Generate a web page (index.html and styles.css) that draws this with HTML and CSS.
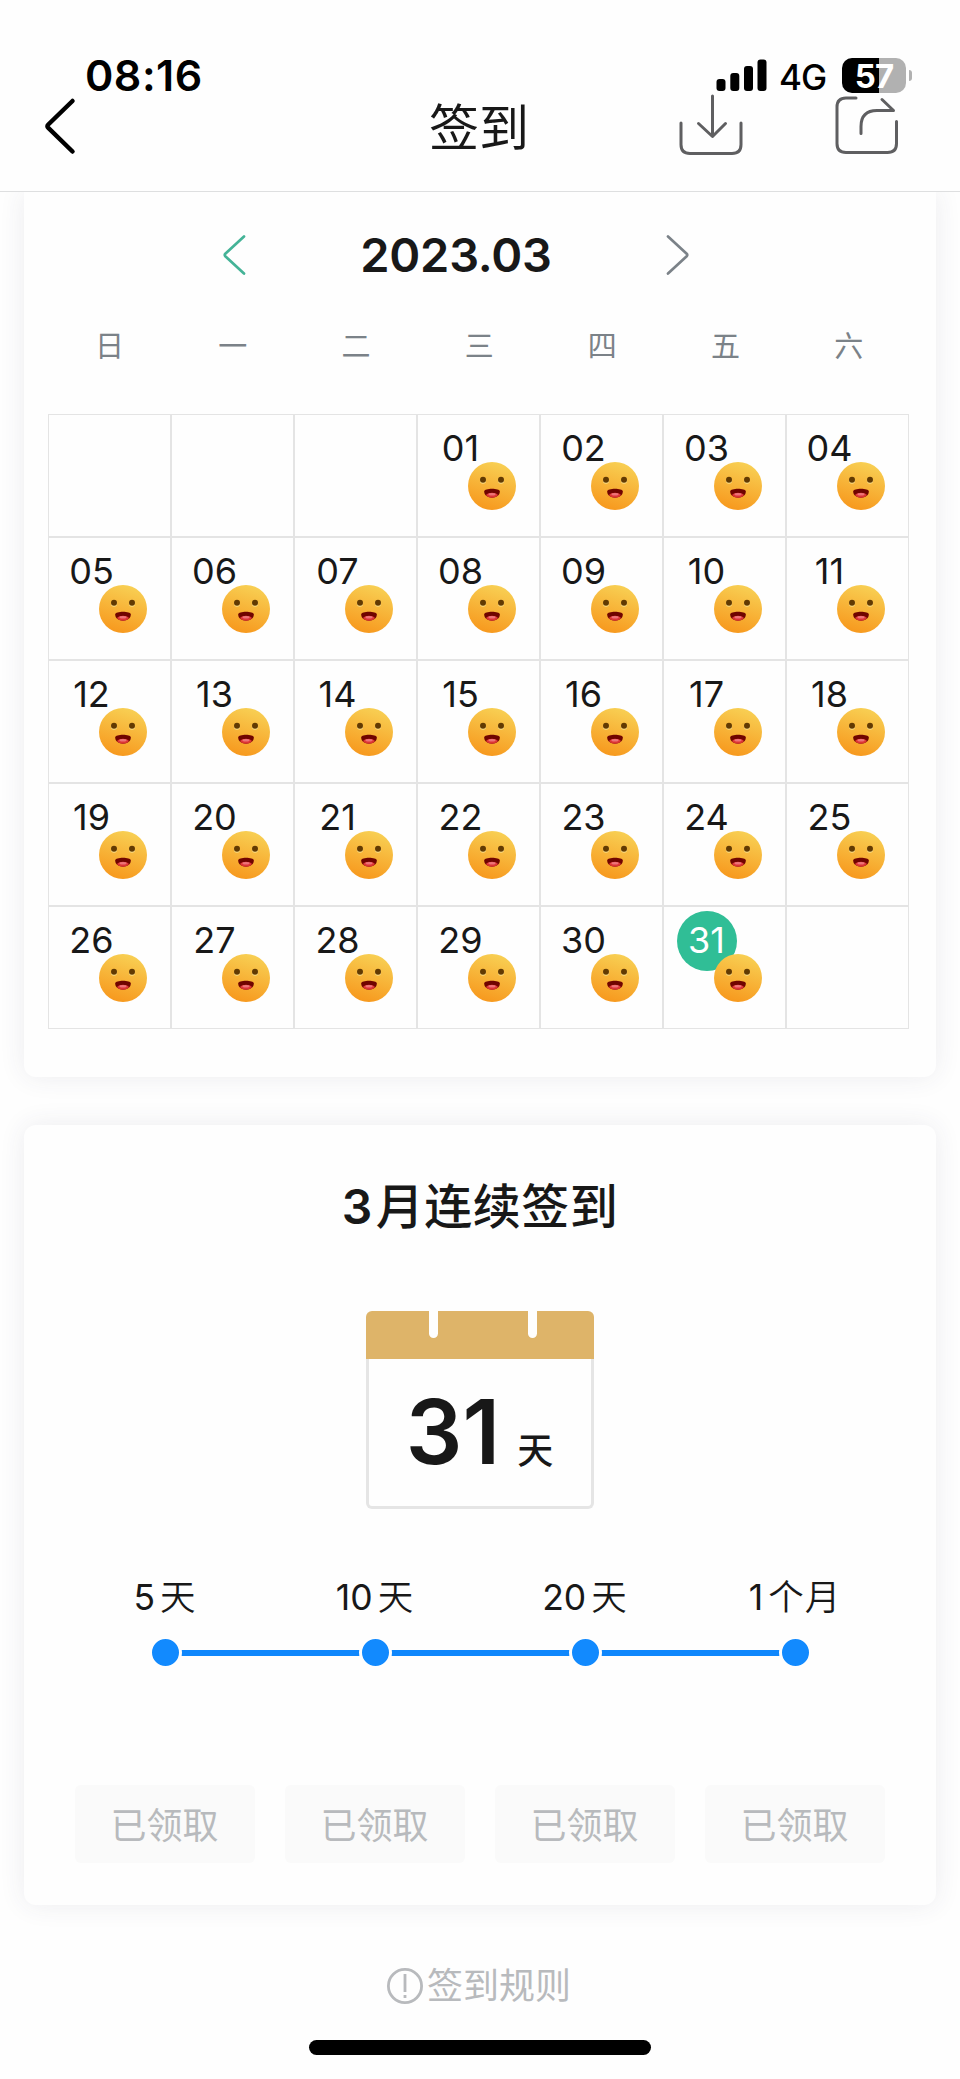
FILE: index.html
```
<!DOCTYPE html>
<html lang="zh-CN">
<head>
    <meta charset="UTF-8">
    <meta name="viewport" content="width=device-width, initial-scale=1.0">
    <title>签到</title>
    <link rel="stylesheet" href="styles.css">
</head>
<body>
    <svg class="defs" width="0" height="0">
        <defs>
            <linearGradient id="face" x1="0.65" y1="0" x2="0.35" y2="1">
                <stop offset="0" stop-color="#f8d054"/>
                <stop offset="1" stop-color="#f7981d"/>
            </linearGradient>
            <symbol id="smile" viewBox="0 0 48 48">
                <circle cx="24" cy="24" r="24" fill="url(#face)"/>
                <circle cx="15" cy="18.8" r="3" fill="#fbe08a"/>
                <circle cx="33" cy="18.8" r="3" fill="#fbe08a"/>
                <circle cx="15" cy="17.8" r="3" fill="#623a02"/>
                <circle cx="33" cy="17.8" r="3" fill="#623a02"/>
                <path d="M16.200 29.500c0-3.600 15.600-3.600 15.600 0 0 8.200-15.600 8.200-15.600 0z" fill="#700400"/>
                <path d="M18 33c2.500-3 9.500-3 12 0-2.600 3.600-9.400 3.600-12 0z" fill="#dc3535"/>
                <ellipse cx="24" cy="32.300" rx="3.600" ry="1.300" fill="#ee7378"/>
            </symbol>
        </defs>
    </svg>

    <header class="header">
        <div class="status">
            <span class="time">08:16</span>
            <div class="status-right">
                <svg class="signal" width="51" height="33" viewBox="0 0 51 33">
                    <rect x="0.500" y="20" width="9" height="12" rx="3"/>
                    <rect x="14.300" y="14" width="9" height="18" rx="3"/>
                    <rect x="28" y="7" width="9" height="25" rx="3"/>
                    <rect x="41.500" y="0.500" width="9" height="31.500" rx="3"/>
                </svg>
                <span class="net">4G</span>
                <span class="battery">57</span>
                <span class="nub"></span>
            </div>
        </div>
        <div class="nav">
            <svg class="back" width="34" height="60" viewBox="0 0 34 60">
                <path d="M29.500 4 5.300 27.500q-1.800 1.700 0 3.400L29.500 54.500"/>
            </svg>
            <h1 class="title">签到</h1>
            <div class="tools">
                <svg width="66" height="64" viewBox="0 0 66 64">
                    <path d="M2 32v21.500q0 9 9 9h42q9 0 9-9V32M33.500 5v40M19.500 32.500l14 13 13-13"/>
                </svg>
                <svg width="66" height="64" viewBox="0 0 66 64">
                    <path d="M21 7H11q-9 0-9 9v36.500q0 9 9 9h41.500q9 0 9-9V30.500M26 42.500v-7Q26 19.500 42 19.500h16.500L47 8.500"/>
                </svg>
            </div>
        </div>
    </header>

    <main class="content">
        <section class="card calendar">
            <div class="month">
                <svg class="arrow prev" width="24" height="44" viewBox="0 0 24 44"><path d="M22 3.500 3.300 20.800q-1.200 1.200 0 2.400L22 40.500"/></svg>
                <h2 class="month-text">2023.03</h2>
                <svg class="arrow next" width="24" height="44" viewBox="0 0 24 44"><path d="M2 3.500 20.700 20.800q1.200 1.200 0 2.400L2 40.500"/></svg>
            </div>
            <div class="week">
                <span>日</span><span>一</span><span>二</span><span>三</span><span>四</span><span>五</span><span>六</span>
            </div>
            <div class="days">
                <div class="day"></div>
                <div class="day"></div>
                <div class="day"></div>
                <div class="day"><span>01</span><svg><use href="#smile"/></svg></div>
                <div class="day"><span>02</span><svg><use href="#smile"/></svg></div>
                <div class="day"><span>03</span><svg><use href="#smile"/></svg></div>
                <div class="day"><span>04</span><svg><use href="#smile"/></svg></div>

                <div class="day"><span>05</span><svg><use href="#smile"/></svg></div>
                <div class="day"><span>06</span><svg><use href="#smile"/></svg></div>
                <div class="day"><span>07</span><svg><use href="#smile"/></svg></div>
                <div class="day"><span>08</span><svg><use href="#smile"/></svg></div>
                <div class="day"><span>09</span><svg><use href="#smile"/></svg></div>
                <div class="day"><span>10</span><svg><use href="#smile"/></svg></div>
                <div class="day"><span>11</span><svg><use href="#smile"/></svg></div>

                <div class="day"><span>12</span><svg><use href="#smile"/></svg></div>
                <div class="day"><span>13</span><svg><use href="#smile"/></svg></div>
                <div class="day"><span>14</span><svg><use href="#smile"/></svg></div>
                <div class="day"><span>15</span><svg><use href="#smile"/></svg></div>
                <div class="day"><span>16</span><svg><use href="#smile"/></svg></div>
                <div class="day"><span>17</span><svg><use href="#smile"/></svg></div>
                <div class="day"><span>18</span><svg><use href="#smile"/></svg></div>

                <div class="day"><span>19</span><svg><use href="#smile"/></svg></div>
                <div class="day"><span>20</span><svg><use href="#smile"/></svg></div>
                <div class="day"><span>21</span><svg><use href="#smile"/></svg></div>
                <div class="day"><span>22</span><svg><use href="#smile"/></svg></div>
                <div class="day"><span>23</span><svg><use href="#smile"/></svg></div>
                <div class="day"><span>24</span><svg><use href="#smile"/></svg></div>
                <div class="day"><span>25</span><svg><use href="#smile"/></svg></div>

                <div class="day"><span>26</span><svg><use href="#smile"/></svg></div>
                <div class="day"><span>27</span><svg><use href="#smile"/></svg></div>
                <div class="day"><span>28</span><svg><use href="#smile"/></svg></div>
                <div class="day"><span>29</span><svg><use href="#smile"/></svg></div>
                <div class="day"><span>30</span><svg><use href="#smile"/></svg></div>
                <div class="day today"><span>31</span><svg><use href="#smile"/></svg></div>
                <div class="day"></div>
            </div>
        </section>

        <section class="card streak">
            <h2 class="streak-title"><b>3</b>月连续签到</h2>
            <div class="sheet">
                <div class="sheet-top"><i></i><i></i></div>
                <div class="sheet-body"><b>31</b><span>天</span></div>
            </div>
            <div class="steps">
                <div class="step"><span class="label">5<em>天</em></span><span class="dot"></span></div>
                <div class="step"><span class="label">10<em>天</em></span><span class="dot"></span></div>
                <div class="step"><span class="label">20<em>天</em></span><span class="dot"></span></div>
                <div class="step"><span class="label">1<em>个月</em></span><span class="dot"></span></div>
            </div>
            <div class="buttons">
                <button class="btn">已领取</button>
                <button class="btn">已领取</button>
                <button class="btn">已领取</button>
                <button class="btn">已领取</button>
            </div>
        </section>

        <div class="rules">
            <svg width="36" height="36" viewBox="0 0 36 36">
                <circle cx="18" cy="18" r="16.600"/>
                <path d="M18 6v18M18 27v3"/>
            </svg>
            <span>签到规则</span>
        </div>
        <div class="home-bar"></div>
    </main>
</body>
</html>
```

FILE: styles.css
```
* {
    box-sizing: border-box;
}

body {
    margin: 0;
    background: #fefefe;
    color: #181818;
    font-family: Inter, "Noto Sans CJK SC", sans-serif;
}

h1, h2 {
    margin: 0;
}

svg {
    display: block;
    fill: none;
    stroke-linecap: round;
    stroke-linejoin: round;
}

.defs {
    position: absolute;
}

/* header */
.header {
    height: 192px;
    padding-top: 54px;
    border-bottom: 1px solid #dedfe0;
}

.status {
    display: flex;
    justify-content: space-between;
    height: 42px;
    padding: 0 48px 0 85px;
    color: #000;
}

.time {
    font-size: 43px;
    font-weight: 600;
    line-height: 43px;
    letter-spacing: 0.5px;
}

.status-right {
    display: flex;
    align-items: center;
}

.signal {
    fill: #000;
}

.net {
    margin-left: 12px;
    width: 48px;
    padding-top: 3px;
    font-size: 35px;
    font-weight: 500;
    line-height: 44px;
    letter-spacing: -1px;
    white-space: nowrap;
}

.battery {
    width: 64px;
    height: 35px;
    margin-left: 15px;
    border-radius: 10px;
    background: linear-gradient(90deg, #000 58%, #b1b1b1 58%);
    color: #fff;
    font-size: 33px;
    font-weight: 700;
    line-height: 36px;
    text-align: center;
    letter-spacing: -1px;
}

.nub {
    width: 3px;
    height: 11px;
    margin-left: 3px;
    border-radius: 0 3px 3px 0;
    background: #b1b1b1;
}

.nav {
    display: grid;
    grid-template-columns: 1fr 100px 1fr;
    height: 64px;
    margin-top: -5px;
    padding: 0 59px 0 43px;
}

.back {
    margin-top: 6px;
    stroke: #000;
    stroke-width: 4.500;
}

.title {
    margin-left: 7px;
    font-size: 50px;
    font-weight: 400;
    line-height: 74px;
    white-space: nowrap;
}

.tools {
    display: flex;
    justify-content: flex-end;
    gap: 90px;
}

.tools svg {
    stroke: #5f5f61;
    stroke-width: 3;
}

/* cards */
.content {
    display: flow-root;
    height: 1887px;
    overflow: hidden;
}

.card {
    margin: 0 24px;
    border-radius: 12px;
    background: #fefefe;
    box-shadow: 0 0 27px rgba(60, 60, 90, 0.09);
}

.calendar {
    height: 885px;
    padding: 0 24px;
    border-radius: 0 0 12px 12px;
}

.month {
    display: flex;
    align-items: center;
    height: 126px;
    padding-left: 174px;
}

.month-text {
    width: 374px;
    margin: -2px 23px 0;
    font-size: 47px;
    font-weight: 600;
    text-align: center;
    letter-spacing: -0.2px;
}

.arrow {
    stroke-width: 2.700;
}

.prev {
    stroke: #44b397;
}

.next {
    stroke: #7b8288;
}

.week {
    display: grid;
    grid-template-columns: repeat(7, 123.2px);
    height: 96px;
    color: #7b8288;
    font-size: 29px;
    font-weight: 400;
    line-height: 57px;
    text-align: center;
}

.days {
    display: grid;
    grid-template-columns: repeat(7, 123px);
    grid-auto-rows: 123px;
    width: 861px;
}

.day {
    position: relative;
    padding: 4px 0 0 13px;
    border: 1px solid #e4e4e4;
}

.day span {
    display: block;
    width: 60px;
    height: 60px;
    padding-right: 1px;
    border-radius: 50%;
    font-size: 36px;
    line-height: 59px;
    text-align: center;
}

.day svg {
    position: absolute;
    left: 50px;
    top: 47px;
    width: 48px;
    height: 48px;
}

.today span {
    background: #30be96;
    color: #fff;
}

/* streak card */
.streak {
    height: 780px;
    margin-top: 48px;
    padding-top: 47px;
}

.streak-title {
    height: 69px;
    font-size: 48px;
    font-weight: 500;
    line-height: 70px;
    text-align: center;
    letter-spacing: 0.5px;
}

.streak-title b {
    margin-right: 3px;
    font-weight: 600;
}

.sheet {
    width: 228px;
    height: 198px;
    margin: 70px auto 0;
}

.sheet-top {
    display: flex;
    justify-content: center;
    gap: 90px;
    height: 48px;
    padding-left: 6px;
    border-radius: 6px 6px 0 0;
    background: #deb469;
}

.sheet-top i {
    width: 9px;
    height: 27px;
    border-radius: 0 0 5px 5px;
    background: #fefefe;
}

.sheet-body {
    display: flex;
    align-items: baseline;
    justify-content: center;
    height: 150px;
    padding-right: 1px;
    border: 3px solid #e5e5e5;
    border-top: 0;
    border-radius: 0 0 6px 6px;
    line-height: 145px;
}

.sheet-body b {
    font-size: 89px;
    font-weight: 600;
}

.sheet-body span {
    margin-left: 17px;
    font-size: 36px;
    font-weight: 500;
}

.steps, .buttons {
    display: grid;
    grid-template-columns: repeat(4, 210px);
    justify-content: center;
}

.steps {
    margin-top: 58px;
}

.step {
    display: flex;
    flex-direction: column;
    align-items: center;
    background: linear-gradient(#0f87fc, #0f87fc) left 83px / 100% 6px no-repeat;
}

.step:first-child {
    background-position: right 83px;
    background-size: 50% 6px;
}

.step:last-child {
    background-size: 50% 6px;
}

.label {
    height: 69px;
    font-size: 35.500px;
    line-height: 61px;
}

.label em {
    margin-left: 5px;
    font-style: normal;
    font-weight: 350;
    letter-spacing: 1px;
}

.dot {
    width: 33px;
    height: 33px;
    border: 3px solid #fefefe;
    border-radius: 50%;
    background: #128afe;
}

.buttons {
    margin-top: 116px;
}

.btn {
    width: 180px;
    height: 78px;
    margin: 0 15px;
    padding: 0 1px 3px 0;
    border: 0;
    border-radius: 6px;
    background: #fafafa;
    color: #b8babd;
    font-family: inherit;
    font-size: 36px;
    font-weight: 400;
}

.rules {
    display: flex;
    align-items: center;
    justify-content: center;
    gap: 4px;
    height: 60px;
    margin-top: 51px;
    padding-right: 2px;
    color: #b8babd;
    font-size: 36px;
    font-weight: 400;
    line-height: 60px;
}

.rules svg {
    stroke: #b8babd;
    stroke-width: 2.800;
    stroke-linecap: butt;
}

.home-bar {
    width: 342px;
    height: 15px;
    margin: 24px auto 0;
    border-radius: 8px;
    background: #000;
}
```
